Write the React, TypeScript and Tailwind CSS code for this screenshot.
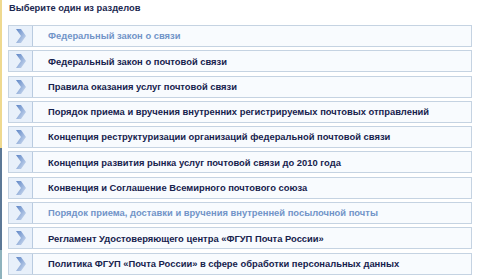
import React from 'react'

const sections = [
  { title: 'Федеральный закон о связи', visited: true },
  { title: 'Федеральный закон о почтовой связи' },
  { title: 'Правила оказания услуг почтовой связи' },
  { title: 'Порядок приема и вручения внутренних регистрируемых почтовых отправлений' },
  { title: 'Концепция реструктуризации организаций федеральной почтовой связи' },
  { title: 'Концепция развития рынка услуг почтовой связи до 2010 года' },
  { title: 'Конвенция и Соглашение Всемирного почтового союза' },
  { title: 'Порядок приема, доставки и вручения внутренней посылочной почты', visited: true },
  { title: 'Регламент Удостоверяющего центра «ФГУП Почта России»' },
  { title: 'Политика ФГУП «Почта России» в сфере обработки персональных данных' },
]

function Chevron() {
  return (
    <svg width="14" height="16" viewBox="0 0 14 16">
      <defs>
        <linearGradient id="chev" x1="0" y1="0" x2="1" y2="1">
          <stop offset="0" stopColor="#5f86c6" />
          <stop offset="1" stopColor="#d3e0f2" />
        </linearGradient>
      </defs>
      <path d="M2 1 L7 1 L12 8 L7 15 L2 15 L7 8 Z" fill="url(#chev)" />
    </svg>
  )
}

export default function App() {
  return (
    <div className="relative w-[480px] h-[279px] bg-white overflow-hidden" style={{ fontFamily: '"Liberation Sans", Arial, sans-serif' }}>
      {/* cropped sidebar edge */}
      <div className="absolute left-0 top-0 w-[2px] h-full flex flex-col">
        <div className="h-[148px] bg-[#efd98f]" />
        <div className="h-[102px] bg-[#5c7896]" />
        <div className="flex-1 bg-[#8fb3bd]" />
      </div>

      <div className="pl-[9px] pt-[2px] text-[9.3px] font-bold text-[#1b2850] leading-[13px]">
        Выберите один из разделов
      </div>

      <div className="mt-[10px] ml-[8px] w-[464px] flex flex-col gap-[3.3px]">
        {sections.map((s) => (
          <div
            key={s.title}
            className="h-[22px] flex items-center border border-[#c5d3e2] bg-[#f8fbfe]"
          >
            <div className="shrink-0 w-[24px] h-[20px] flex items-center justify-center bg-[#e8f0fa] border-r border-[#b9cbe0]">
              <Chevron />
            </div>
            <span
              className={`ml-[15px] text-[9.4px] font-bold leading-none whitespace-nowrap ${
                s.visited ? 'text-[#7194c8]' : 'text-[#16224d]'
              }`}
            >
              {s.title}
            </span>
          </div>
        ))}
      </div>
    </div>
  )
}
